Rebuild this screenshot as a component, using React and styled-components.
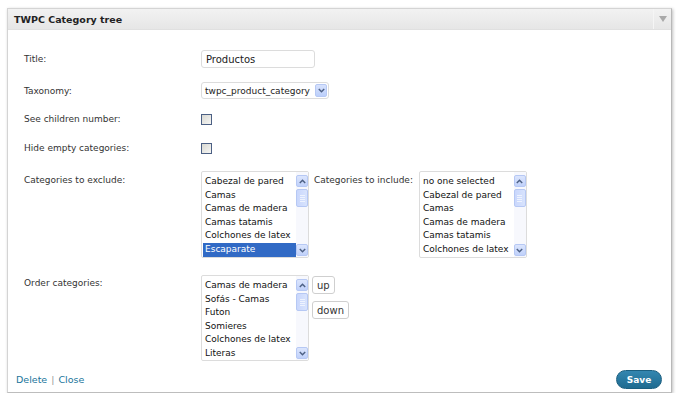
import React from "react"
import styled, { createGlobalStyle } from "styled-components"

const GlobalStyle = createGlobalStyle`
  body {
    margin: 0;
    background: #fff;
    font-family: "DejaVu Sans", Verdana, sans-serif;
    font-size: 9px;
    color: #333;
  }
`

const excludeItems = [
  "Cabezal de pared",
  "Camas",
  "Camas de madera",
  "Camas tatamis",
  "Colchones de latex",
  "Escaparate",
]

const includeItems = [
  "no one selected",
  "Cabezal de pared",
  "Camas",
  "Camas de madera",
  "Camas tatamis",
  "Colchones de latex",
]

const orderItems = [
  "Camas de madera",
  "Sofás - Camas",
  "Futon",
  "Somieres",
  "Colchones de latex",
  "Literas",
]

const s = {
  Panel: styled.div`
    margin: 8px 0 0 7px;
    width: 663px;
    border: 1px solid #d4d4d4;
    border-right-color: #b8b8b8;
    border-bottom-color: #bdbdbd;
    box-shadow: 1px 1px 3px rgba(0, 0, 0, 0.25);
    background: #fff;
  `,
  Header: styled.div`
    display: flex;
    align-items: center;
    height: 20px;
    background: linear-gradient(#f2f2f2, #e6e6e6);
    border-bottom: 1px solid #e0e0e0;
  `,
  HeaderTitle: styled.div`
    flex: 1;
    padding-left: 6px;
    font-weight: bold;
    font-size: 9.5px;
    color: #222;
  `,
  Handle: styled.div`
    display: flex;
    align-items: center;
    justify-content: center;
    width: 17px;
    height: 100%;
    border-left: 1px solid #f5f5f5;
  `,
  Body: styled.div`
    display: flex;
    flex-direction: column;
    padding: 20px 0 3px 16px;
  `,
  Row: styled.div`
    display: flex;
    align-items: ${(p) => (p.$top ? "flex-start" : "center")};
    height: ${(p) => p.$h}px;
    margin-top: ${(p) => p.$mt || 0}px;
  `,
  Label: styled.div`
    width: 177px;
    flex: none;
    padding-top: ${(p) => p.$pt || 0}px;
    white-space: nowrap;
  `,
  InlineLabel: styled.div`
    padding: 4px 6px 0 5px;
    white-space: nowrap;
  `,
  TextInput: styled.div`
    box-sizing: border-box;
    width: 114px;
    height: 18px;
    border: 1px solid #dcdcdc;
    border-radius: 3px;
    padding: 0 4px;
    display: flex;
    align-items: center;
    font-size: 10px;
    color: #222;
  `,
  Select: styled.div`
    box-sizing: border-box;
    width: 128px;
    height: 17px;
    border: 1px solid #dcdcdc;
    border-radius: 3px;
    padding: 0 1px 0 3px;
    display: flex;
    align-items: center;
    justify-content: space-between;
    color: #222;
  `,
  ArrowBtn: styled.div`
    display: flex;
    align-items: center;
    justify-content: center;
    box-sizing: border-box;
    width: 12px;
    height: 13px;
    border: 1px solid #b6c8f4;
    border-radius: 2px;
    background: linear-gradient(#d7e2fd, #bccffa);
  `,
  Checkbox: styled.div`
    box-sizing: border-box;
    width: 11px;
    height: 11px;
    border: 1px solid #4c6084;
    background: linear-gradient(135deg, #d8d8d2, #f6f6f4);
  `,
  ListBox: styled.div`
    box-sizing: border-box;
    display: flex;
    width: 108px;
    height: ${(p) => p.$h}px;
    border: 1px solid #dcdcdc;
    border-radius: 2px;
    background: #fff;
    color: #111;
  `,
  Items: styled.div`
    flex: 1;
    padding: 3px 0 0 1px;
    overflow: hidden;
  `,
  Item: styled.div`
    height: 13.6px;
    line-height: 13.6px;
    padding-left: 2px;
    white-space: nowrap;
    overflow: hidden;
    background: ${(p) => (p.$selected ? "#316ac5" : "transparent")};
    color: ${(p) => (p.$selected ? "#fff" : "#111")};
  `,
  Scrollbar: styled.div`
    display: flex;
    flex-direction: column;
    width: 12px;
    padding: 3px 0 1px;
    background: #f7f8fd;
  `,
  ScrollBtn: styled.div`
    display: flex;
    align-items: center;
    justify-content: center;
    box-sizing: border-box;
    height: 12px;
    border: 1px solid #b6c8f4;
    border-radius: 2px;
    background: linear-gradient(#dbe5fd, #c0d1fa);
  `,
  Thumb: styled.div`
    display: flex;
    flex-direction: column;
    align-items: center;
    justify-content: center;
    gap: 1px;
    box-sizing: border-box;
    height: 18px;
    margin-top: 2px;
    border: 1px solid #b6c8f4;
    border-radius: 2px;
    background: linear-gradient(90deg, #c9d7fc, #d8e3fd);
  `,
  Grip: styled.div`
    width: 5px;
    height: 1px;
    background: #eef3fe;
  `,
  Track: styled.div`
    flex: 1;
  `,
  Buttons: styled.div`
    display: flex;
    flex-direction: column;
    align-items: flex-start;
    gap: 7px;
    padding-left: 3px;
    padding-top: 1px;
  `,
  SmallButton: styled.div`
    box-sizing: border-box;
    height: 18px;
    padding: 0 4px;
    display: flex;
    align-items: center;
    border: 1px solid #cfcfcf;
    border-radius: 3px;
    background: #fff;
    font-size: 10px;
    color: #333;
  `,
  Footer: styled.div`
    display: flex;
    align-items: center;
    justify-content: space-between;
    height: 19px;
    margin-top: 9px;
    margin-left: -8px;
    padding-right: 9px;
  `,
  Links: styled.div`
    display: flex;
    gap: 4px;
    color: #999;
    font-size: 9.5px;
  `,
  Link: styled.span`
    color: #21759b;
  `,
  SaveButton: styled.div`
    box-sizing: border-box;
    width: 46px;
    height: 19px;
    display: flex;
    align-items: center;
    justify-content: center;
    border: 1px solid #1b5f80;
    border-radius: 10px;
    background: linear-gradient(#3386b0, #1f6b90);
    color: #fff;
    font-weight: bold;
    font-size: 9px;
  `,
}

const Chevron = ({ up }) => (
  <svg width="7" height="5" viewBox="0 0 7 5">
    <polyline
      points={up ? "0.8,4 3.5,1.3 6.2,4" : "0.8,1 3.5,3.7 6.2,1"}
      fill="none"
      stroke="#4d6185"
      strokeWidth="1.5"
    />
  </svg>
)

const ListBox = ({ items, selected, h }) => (
  <s.ListBox $h={h}>
    <s.Items>
      {items.map((item, index) => (
        <s.Item key={index} $selected={index === selected}>
          {item}
        </s.Item>
      ))}
    </s.Items>
    <s.Scrollbar>
      <s.ScrollBtn>
        <Chevron up />
      </s.ScrollBtn>
      <s.Thumb>
        <s.Grip />
        <s.Grip />
        <s.Grip />
        <s.Grip />
      </s.Thumb>
      <s.Track />
      <s.ScrollBtn>
        <Chevron />
      </s.ScrollBtn>
    </s.Scrollbar>
  </s.ListBox>
)

const App = () => {
  return (
    <>
      <GlobalStyle />
      <s.Panel>
        <s.Header>
          <s.HeaderTitle>TWPC Category tree</s.HeaderTitle>
          <s.Handle>
            <svg width="8" height="6" viewBox="0 0 8 6">
              <polygon points="0,0 8,0 4,6" fill="#a9a9a9" />
            </svg>
          </s.Handle>
        </s.Header>
        <s.Body>
          <s.Row $h={18}>
            <s.Label>Title:</s.Label>
            <s.TextInput>Productos</s.TextInput>
          </s.Row>
          <s.Row $h={17} $mt={14}>
            <s.Label>Taxonomy:</s.Label>
            <s.Select>
              twpc_product_category
              <s.ArrowBtn>
                <Chevron />
              </s.ArrowBtn>
            </s.Select>
          </s.Row>
          <s.Row $h={12} $mt={14}>
            <s.Label>See children number:</s.Label>
            <s.Checkbox />
          </s.Row>
          <s.Row $h={12} $mt={17}>
            <s.Label>Hide empty categories:</s.Label>
            <s.Checkbox />
          </s.Row>
          <s.Row $h={87} $mt={17} $top>
            <s.Label $pt={4}>Categories to exclude:</s.Label>
            <ListBox items={excludeItems} selected={5} h={87} />
            <s.InlineLabel>Categories to include:</s.InlineLabel>
            <ListBox items={includeItems} h={87} />
          </s.Row>
          <s.Row $h={86} $mt={17} $top>
            <s.Label $pt={3}>Order categories:</s.Label>
            <ListBox items={orderItems} h={86} />
            <s.Buttons>
              <s.SmallButton>up</s.SmallButton>
              <s.SmallButton>down</s.SmallButton>
            </s.Buttons>
          </s.Row>
          <s.Footer>
            <s.Links>
              <s.Link>Delete</s.Link>|<s.Link>Close</s.Link>
            </s.Links>
            <s.SaveButton>Save</s.SaveButton>
          </s.Footer>
        </s.Body>
      </s.Panel>
    </>
  )
}

export default App
